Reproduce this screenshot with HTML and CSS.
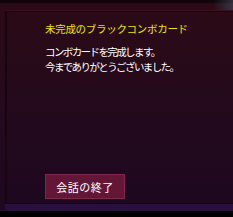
FILE: index.html
```html
<!DOCTYPE html>
<html lang="ja">

<head>
    <meta charset="UTF-8">
    <meta name="viewport" content="width=device-width, initial-scale=1.0">
    <title>NPC Dialog</title>
    <link rel="stylesheet" href="styles.css">
</head>

<body>
    <div class="dialog_window">
        <div class="top_glint"></div>
        <div class="dialog_frame">
            <p class="dialog_title">未完成のブラックコンボカード</p>
            <p class="dialog_text">コンボカードを完成します。<br>今までありがとうございました。</p>
            <button class="end_button" type="button">会話の終了</button>
        </div>
    </div>
</body>

</html>
```

FILE: styles.css
```css
body {
    margin: 0;
    padding: 0;
    background-color: #000;
    font-family: "Noto Sans CJK JP", "DejaVu Sans", sans-serif;
}

.dialog_window {
    position: relative;
    width: 233px;
    height: 211px;
    box-sizing: border-box;
    padding: 7px 0 6px 5px;
    border-top: 3px solid #12040a;
    background: linear-gradient(to bottom, #2c0a16 0%, #250a1c 45%, #1d0820 100%);
    border-bottom: 1px solid #2c1040;
}

/* little bluish highlight in the top right corner */
.top_glint {
    position: absolute;
    top: -3px;
    right: 0;
    width: 20px;
    height: 10px;
    background: linear-gradient(to left, rgba(70, 90, 110, 0.5), rgba(70, 90, 110, 0));
}

.dialog_frame {
    display: flex;
    flex-direction: column;
    height: 194px;
    box-sizing: border-box;
    padding: 11px 0 4px 39px;
    border-top: 1px solid #3a1020;
    border-left: 1px solid #140410;
    border-bottom: 1px solid #120612;
    box-shadow: inset 1px 1px 0 #1a0610, 0 1px 0 #2a1040, 0 6px 0 #28103c;
}

.dialog_title {
    margin: 0 0 8px 0;
    color: #f0e400;
    font-size: 10.5px;
    line-height: 14px;
    letter-spacing: -0.3px;
}

.dialog_text {
    margin: 0;
    color: #fff;
    font-size: 10.5px;
    line-height: 15px;
    letter-spacing: -1.6px;
}

.end_button {
    align-self: flex-start;
    margin-top: auto;
    width: 80px;
    height: 25px;
    padding: 0;
    background-color: #641636;
    border: 1px solid #7c2848;
    color: #fff;
    font-family: inherit;
    font-size: 11px;
    letter-spacing: 0.5px;
    cursor: pointer;
}
```
